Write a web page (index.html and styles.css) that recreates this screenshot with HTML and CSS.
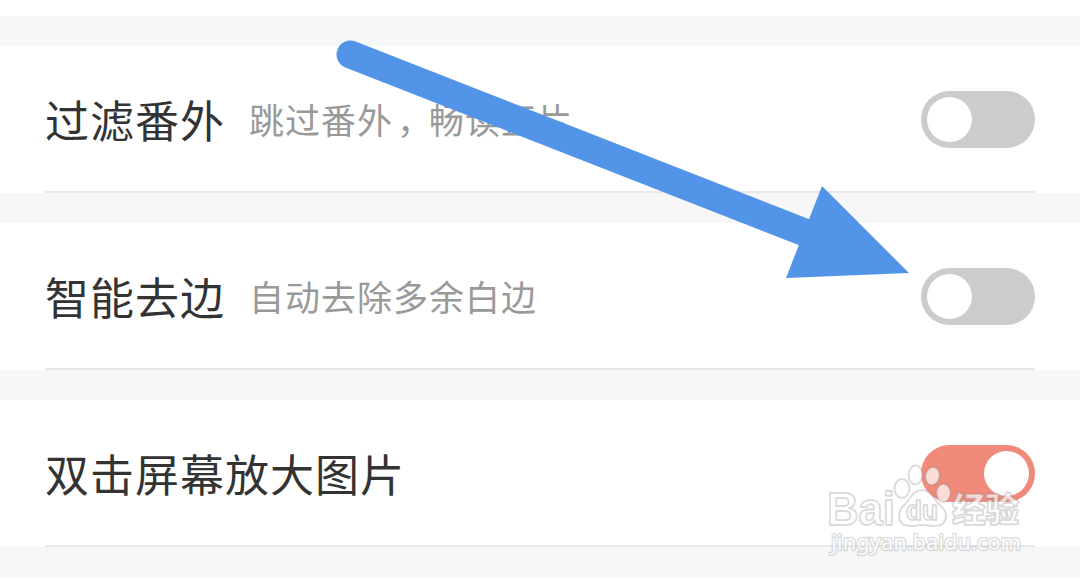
FILE: index.html
```html
<!DOCTYPE html>
<html lang="zh-CN">

<head>
    <meta charset="UTF-8">
    <meta name="viewport" content="width=device-width, initial-scale=1.0">
    <title>阅读设置</title>
    <link rel="stylesheet" href="styles.css">
</head>

<body>
    <div class="settings">
        <div class="row">
            <span class="title">过滤番外</span>
            <span class="desc">跳过番外<span class="comma">，</span>畅读正片</span>
            <span class="switch"><span class="knob"></span></span>
        </div>
        <div class="row">
            <span class="title">智能去边</span>
            <span class="desc">自动去除多余白边</span>
            <span class="switch"><span class="knob"></span></span>
        </div>
        <div class="row">
            <span class="title">双击屏幕放大图片</span>
            <span class="switch on"><span class="knob"></span></span>
        </div>
    </div>

    <!-- arrow and watermark lie over the list -->
    <svg class="overlay" width="1080" height="580" viewBox="0 0 1080 580">
        <g class="arrow">
            <line x1="350.5" y1="54.5" x2="810" y2="234.5" />
            <polygon points="822,186 909,273 786,278" />
        </g>
        <g class="watermark">
            <text class="brand" x="827" y="525" textLength="68" lengthAdjust="spacingAndGlyphs">Bai</text>
            <ellipse cx="902" cy="488.500" rx="7.500" ry="9.500" />
            <ellipse cx="915.500" cy="475" rx="7" ry="9.500" />
            <ellipse cx="932.500" cy="476" rx="7" ry="9" transform="rotate(12 932.500 476)" />
            <ellipse cx="943.500" cy="493" rx="7" ry="9" />
            <path d="M922 490C916 490 912 494 908 501C904 506 899 508 899 516C899 523 904 526 911 526C916 526 918 525 922 525C927 525 930 526 935 526C942 526 946 522 946 515C946 509 941 507 937 502C932 495 929 490 922 490Z" />
            <text class="du" x="906" y="520" textLength="32" lengthAdjust="spacingAndGlyphs">du</text>
            <text class="cjk" x="952" y="522" textLength="67" lengthAdjust="spacingAndGlyphs">经验</text>
            <text class="site" x="831" y="550" textLength="190" lengthAdjust="spacingAndGlyphs">jingyan.baidu.com</text>
        </g>
    </svg>
</body>

</html>
```

FILE: styles.css
```css
body {
    margin: 0;
    height: 580px;
    overflow: hidden;
    background-color: #fff;
    font-family: "Noto Sans CJK SC", sans-serif;
}

.settings {
    display: flex;
    flex-direction: column;
    gap: 30px;
    margin-top: 16px;
    padding: 30px 0;
    background-color: #f7f7f7;
}

.row {
    display: flex;
    align-items: center;
    box-sizing: border-box;
    height: 147px;
    padding: 0 45px;
    /* divider keeps the side padding of the row */
    background: linear-gradient(#e9e9e9, #e9e9e9) center bottom / 990px 2px no-repeat #fff;
}

.title {
    margin-bottom: 1px;
    font-size: 44px;
    line-height: 60px;
    letter-spacing: 1px;
    color: #333;
}

.desc {
    margin-left: 24px;
    margin-bottom: 1px;
    font-size: 35px;
    line-height: 50px;
    letter-spacing: 1px;
    color: #999;
}

.comma {
    padding-left: 4px;
    letter-spacing: -3px;
}

.switch {
    display: flex;
    box-sizing: border-box;
    width: 114px;
    height: 57px;
    margin-left: auto;
    padding: 6px;
    border-radius: 29px;
    background-color: #ccc;
}

.switch.on {
    justify-content: flex-end;
    background-color: #f08b7b;
}

.knob {
    width: 45px;
    height: 45px;
    border-radius: 50%;
    background-color: #fff;
}

.overlay {
    position: absolute;
    top: 0;
    left: 0;
}

.arrow line {
    stroke: #5294e8;
    stroke-width: 28;
    stroke-linecap: round;
}

.arrow polygon {
    fill: #5294e8;
}

.watermark {
    fill: rgba(255, 255, 255, 0.7);
    stroke: rgba(130, 130, 130, 0.28);
    stroke-width: 2;
    stroke-linejoin: round;
}

.brand {
    font: bold 46px "Liberation Sans", sans-serif;
}

.du {
    font: bold 28px "Liberation Sans", sans-serif;
}

.cjk {
    font: 900 34px "Noto Sans CJK SC", sans-serif;
}

.site {
    font: 500 22px "Noto Sans", sans-serif;
    fill: rgba(255, 255, 255, 0.85);
    stroke-width: 2.5;
    paint-order: stroke;
}
```
